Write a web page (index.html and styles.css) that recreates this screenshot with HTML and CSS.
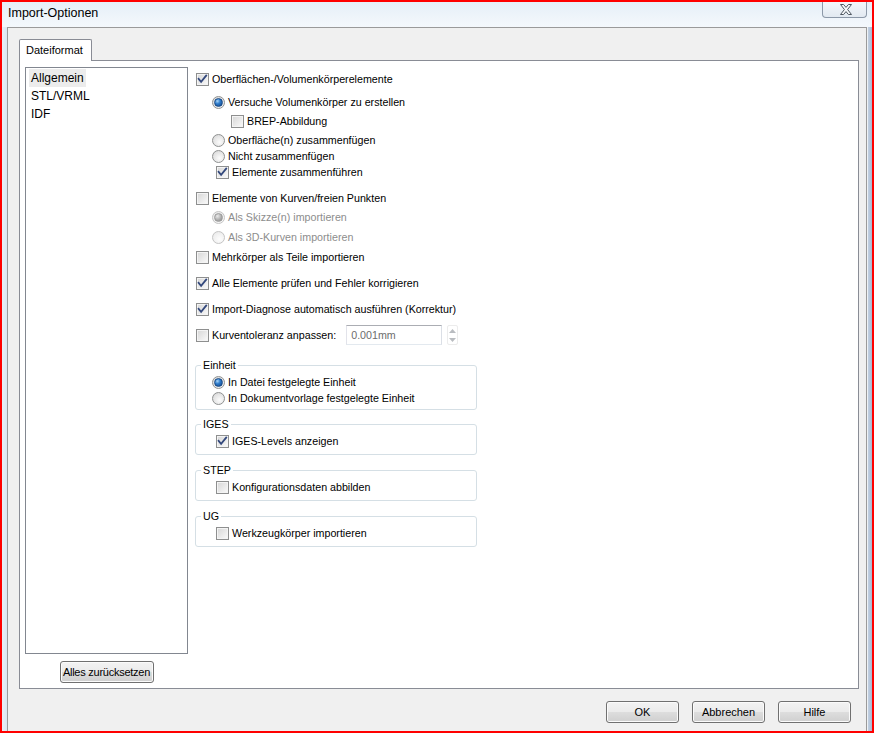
FILE: index.html
```html
<!DOCTYPE html>
<html lang="de">
<head>
<meta charset="utf-8">
<title>Import-Optionen</title>
<link rel="stylesheet" href="styles.css">
</head>
<body>
<div class="window">
  <div class="titlebar">
    <span class="title">Import-Optionen</span>
    <div class="close-btn">
      <svg width="12" height="11" viewBox="0 0 12 11"><path d="M0.5 0.5 H3.6 L6 3.4 L8.4 0.5 H11.5 L7.6 5.5 L11.5 10.5 H8.4 L6 7.6 L3.6 10.5 H0.5 L4.4 5.5 Z" fill="#f7f9fb" stroke="#505862" stroke-width="1" stroke-linejoin="round"/></svg>
    </div>
  </div>
  <div class="frame-row">
    <div class="frame-left"></div>
    <div class="client">
      <div class="tabs">
        <div class="tab">Dateiformat</div>
      </div>
      <div class="pane">
        <div class="left-col">
          <ul class="listbox">
            <li class="sel"><span>Allgemein</span></li>
            <li><span>STL/VRML</span></li>
            <li><span>IDF</span></li>
          </ul>
          <div class="reset-row"><button class="btn btn-reset">Alles zurücksetzen</button></div>
        </div>
        <div class="options">
          <div class="opt"><span class="cb"><svg class="tick" viewBox="0 0 11 11"><path d="M1.6 4.8 L4.1 7.8 L9.2 1.6"/></svg></span><span class="lbl">Oberflächen-/Volumenkörperelemente</span></div>
          <div class="opt ind1 mt7"><span class="rb on"></span><span class="lbl">Versuche Volumenkörper zu erstellen</span></div>
          <div class="opt ind2 mt3"><span class="cb"></span><span class="lbl">BREP-Abbildung</span></div>
          <div class="opt ind1 mt3"><span class="rb"></span><span class="lbl">Oberfläche(n) zusammenfügen</span></div>
          <div class="opt ind1"><span class="rb"></span><span class="lbl">Nicht zusammenfügen</span></div>
          <div class="opt ind1b"><span class="cb"><svg class="tick" viewBox="0 0 11 11"><path d="M1.6 4.8 L4.1 7.8 L9.2 1.6"/></svg></span><span class="lbl">Elemente zusammenführen</span></div>

          <div class="opt mt10"><span class="cb"></span><span class="lbl">Elemente von Kurven/freien Punkten</span></div>
          <div class="opt ind1 mt3 disabled"><span class="rb on"></span><span class="lbl">Als Skizze(n) importieren</span></div>
          <div class="opt ind1 mt4 disabled"><span class="rb"></span><span class="lbl">Als 3D-Kurven importieren</span></div>

          <div class="opt mt4"><span class="cb"></span><span class="lbl">Mehrkörper als Teile importieren</span></div>
          <div class="opt mt10"><span class="cb"><svg class="tick" viewBox="0 0 11 11"><path d="M1.6 4.8 L4.1 7.8 L9.2 1.6"/></svg></span><span class="lbl">Alle Elemente prüfen und Fehler korrigieren</span></div>
          <div class="opt mt10"><span class="cb"><svg class="tick" viewBox="0 0 11 11"><path d="M1.6 4.8 L4.1 7.8 L9.2 1.6"/></svg></span><span class="lbl">Import-Diagnose automatisch ausführen (Korrektur)</span></div>

          <div class="opt tol-row mt8"><span class="cb"></span><span class="lbl">Kurventoleranz anpassen:</span>
            <div class="tol-input">0.001mm</div>
            <div class="spin">
              <span><svg width="7" height="4" viewBox="0 0 7 4"><path d="M0 4 L3.5 0 L7 4 Z" fill="#b9bcc0"/></svg></span>
              <span><svg width="7" height="4" viewBox="0 0 7 4"><path d="M0 0 L3.5 4 L7 0 Z" fill="#b9bcc0"/></svg></span>
            </div>
          </div>

          <fieldset class="grp grp-first grp-multi">
            <legend>Einheit</legend>
            <div class="opt gind-r"><span class="rb on"></span><span class="lbl">In Datei festgelegte Einheit</span></div>
            <div class="opt gind-r"><span class="rb"></span><span class="lbl">In Dokumentvorlage festgelegte Einheit</span></div>
          </fieldset>

          <fieldset class="grp">
            <legend>IGES</legend>
            <div class="opt gind-c"><span class="cb"><svg class="tick" viewBox="0 0 11 11"><path d="M1.6 4.8 L4.1 7.8 L9.2 1.6"/></svg></span><span class="lbl">IGES-Levels anzeigen</span></div>
          </fieldset>

          <fieldset class="grp">
            <legend>STEP</legend>
            <div class="opt gind-c"><span class="cb"></span><span class="lbl">Konfigurationsdaten abbilden</span></div>
          </fieldset>

          <fieldset class="grp">
            <legend>UG</legend>
            <div class="opt gind-c"><span class="cb"></span><span class="lbl">Werkzeugkörper importieren</span></div>
          </fieldset>
        </div>
      </div>
      <div class="dialog-buttons">
        <button class="btn">OK</button>
        <button class="btn">Abbrechen</button>
        <button class="btn">Hilfe</button>
      </div>
    </div>
    <div class="frame-right"></div>
  </div>
</div>
</body>
</html>
```
FILE: styles.css
```css
* { box-sizing: border-box; }
html, body { margin: 0; padding: 0; }
body {
  font-family: "Liberation Sans", Arial, sans-serif;
  font-size: 10.7px;
  color: #000;
  background: #fff;
}
.window {
  width: 874px;
  height: 733px;
  border: 2px solid #ff0000;
  display: flex;
  flex-direction: column;
  background: linear-gradient(180deg, #e6eff8 0, #f4f8fc 25px, #e3ecf5 100%);
  overflow: hidden;
}
.titlebar {
  height: 25px;
  flex: none;
  display: flex;
  align-items: flex-start;
}
.title {
  padding-left: 6px;
  line-height: 23px;
  font-size: 12.5px;
  color: #000;
}
.close-btn {
  margin-left: auto;
  margin-right: 5px;
  width: 45px;
  height: 16px;
  border: 1px solid #8c98a8;
  border-top: none;
  border-radius: 0 0 4px 4px;
  background: linear-gradient(180deg, #f3f7fb, #e2e9f1);
  display: flex;
  align-items: center;
  justify-content: center;
  padding-left: 2px;
}
.frame-row {
  flex: 1;
  display: flex;
  min-height: 0;
}
.frame-left {
  width: 5px;
  flex: none;
  background: linear-gradient(90deg, #e9f0f7, #dbe6f1);
}
.frame-right {
  width: 5px;
  flex: none;
  background: linear-gradient(90deg, #eef2f6 0 1px, #c3d1e2 1px, #a6b9d2 100%);
}
.client {
  width: 860px;
  flex: none;
  border: 1px solid #9a9a9a;
  border-bottom: none;
  background: #f0f0f0;
  padding: 11px 7px 0 11px;
  display: flex;
  flex-direction: column;
}
.tabs {
  display: flex;
  height: 21px;
  flex: none;
}
.tab {
  position: relative;
  z-index: 1;
  width: 73px;
  height: 22px;
  border: 1px solid #898c95;
  border-bottom: none;
  border-radius: 2px 2px 0 0;
  background: #fff;
  padding-left: 6px;
  line-height: 20px;
  font-size: 11px;
}
.pane {
  height: 629px;
  flex: none;
  border: 1px solid #898c95;
  background: #fff;
  display: flex;
}
.left-col {
  padding: 6px 0 0 5px;
  display: flex;
  flex-direction: column;
}
.listbox {
  width: 163px;
  height: 587px;
  margin: 0;
  border: 1px solid #828790;
  padding: 1px 0 0 3px;
  list-style: none;
  font-size: 12px;
}
.listbox li {
  height: 18px;
  line-height: 18px;
}
.listbox li span {
  display: inline-block;
  padding: 0 2px;
}
.listbox li.sel span { background: #ececec; }
.reset-row {
  display: flex;
  justify-content: center;
  margin-top: 7px;
}
.btn {
  width: 73px;
  height: 22px;
  padding: 0;
  border: 1px solid #707070;
  border-radius: 3px;
  background: linear-gradient(180deg, #f3f3f3 0%, #ebebeb 48%, #dddddd 52%, #cfcfcf 100%);
  box-shadow: inset 0 0 0 1px #fbfbfb;
  font-family: "Liberation Sans", Arial, sans-serif;
  font-size: 11px;
  color: #000;
}
.btn-reset {
  width: 94px;
  letter-spacing: -0.25px;
}
.dialog-buttons {
  display: flex;
  justify-content: flex-end;
  gap: 13px;
  margin-top: 12px;
  padding-right: 8px;
}
.options {
  margin-left: 7px;
  padding-top: 10px;
  display: flex;
  flex-direction: column;
}
.opt {
  display: flex;
  align-items: center;
  height: 16px;
  padding-left: 1px;
  white-space: nowrap;
}
.ind1 { padding-left: 17px; }
.ind1b { padding-left: 21px; }
.ind2 { padding-left: 36px; }
.mt3 { margin-top: 3px; }
.mt4 { margin-top: 4px; }
.mt7 { margin-top: 7px; }
.mt8 { margin-top: 8px; }
.mt10 { margin-top: 10px; }
.lbl { margin-left: 3px; }

.cb {
  width: 13px;
  height: 13px;
  flex: none;
  border: 1px solid #8e8f8f;
  background: linear-gradient(135deg, #d6d6d6 0%, #eaeaea 55%, #fbfbfb 100%);
  box-shadow: inset 0 0 0 1px #f4f4f4;
  display: flex;
  align-items: center;
  justify-content: center;
}
.tick {
  width: 11px;
  height: 11px;
}
.tick path {
  fill: none;
  stroke: #33487c;
  stroke-width: 1.8;
  stroke-linecap: square;
}
.rb {
  width: 13px;
  height: 13px;
  flex: none;
  border-radius: 50%;
  border: 1px solid #8f9191;
  background: radial-gradient(circle at 60% 65%, #fcfcfc 0%, #e6e6e6 55%, #d2d2d2 100%);
  display: grid;
  place-items: center;
}
.rb.on::after {
  content: "";
  width: 7px;
  height: 7px;
  border-radius: 50%;
  background: radial-gradient(circle at 35% 30%, #a9d6f8 0%, #2f7ccb 40%, #0d3f80 100%);
  border: 1px solid #1a4a86;
}
.disabled .lbl { color: #8d8d8d; }
.disabled .rb {
  border-color: #c4c4c4;
  background: radial-gradient(circle at 60% 65%, #fdfdfd 0%, #f0f0f0 60%, #e6e6e6 100%);
}
.disabled .rb.on::after {
  background: radial-gradient(circle at 35% 30%, #eaeaea 0%, #a9a9a9 60%, #8c8c8c 100%);
  border-color: #9a9a9a;
}
.tol-row { height: 20px; }
.tol-input {
  margin-left: 10px;
  width: 96px;
  height: 20px;
  border: 1px solid #abadb3;
  border-color: #abadb3 #dbdfe6 #e3e9ef #e2e3ea;
  padding-left: 4px;
  line-height: 18px;
  color: #6d6d6d;
  background: #fff;
}
.spin {
  margin-left: 5px;
  width: 11px;
  height: 20px;
  border: 1px solid #ececec;
  border-radius: 2px;
  display: flex;
  flex-direction: column;
}
.spin span {
  flex: 1;
  display: flex;
  align-items: center;
  justify-content: center;
}
.grp {
  width: 282px;
  margin: 7px 0 0 0;
  border: 1px solid #d5dfe5;
  border-radius: 3px;
  padding: 2px 5px 5px 5px;
  min-width: 0;
}
.grp-first { margin-top: 13px; }
.grp-multi { padding-bottom: 3px; }
.grp + .grp { margin-top: 8px; }
.grp-first + .grp { margin-top: 7px; }
.grp legend {
  padding: 0 2px;
  line-height: 14px;
  font-size: 10.7px;
}
.gind-r { padding-left: 11px; }
.gind-c { padding-left: 15px; }
```
